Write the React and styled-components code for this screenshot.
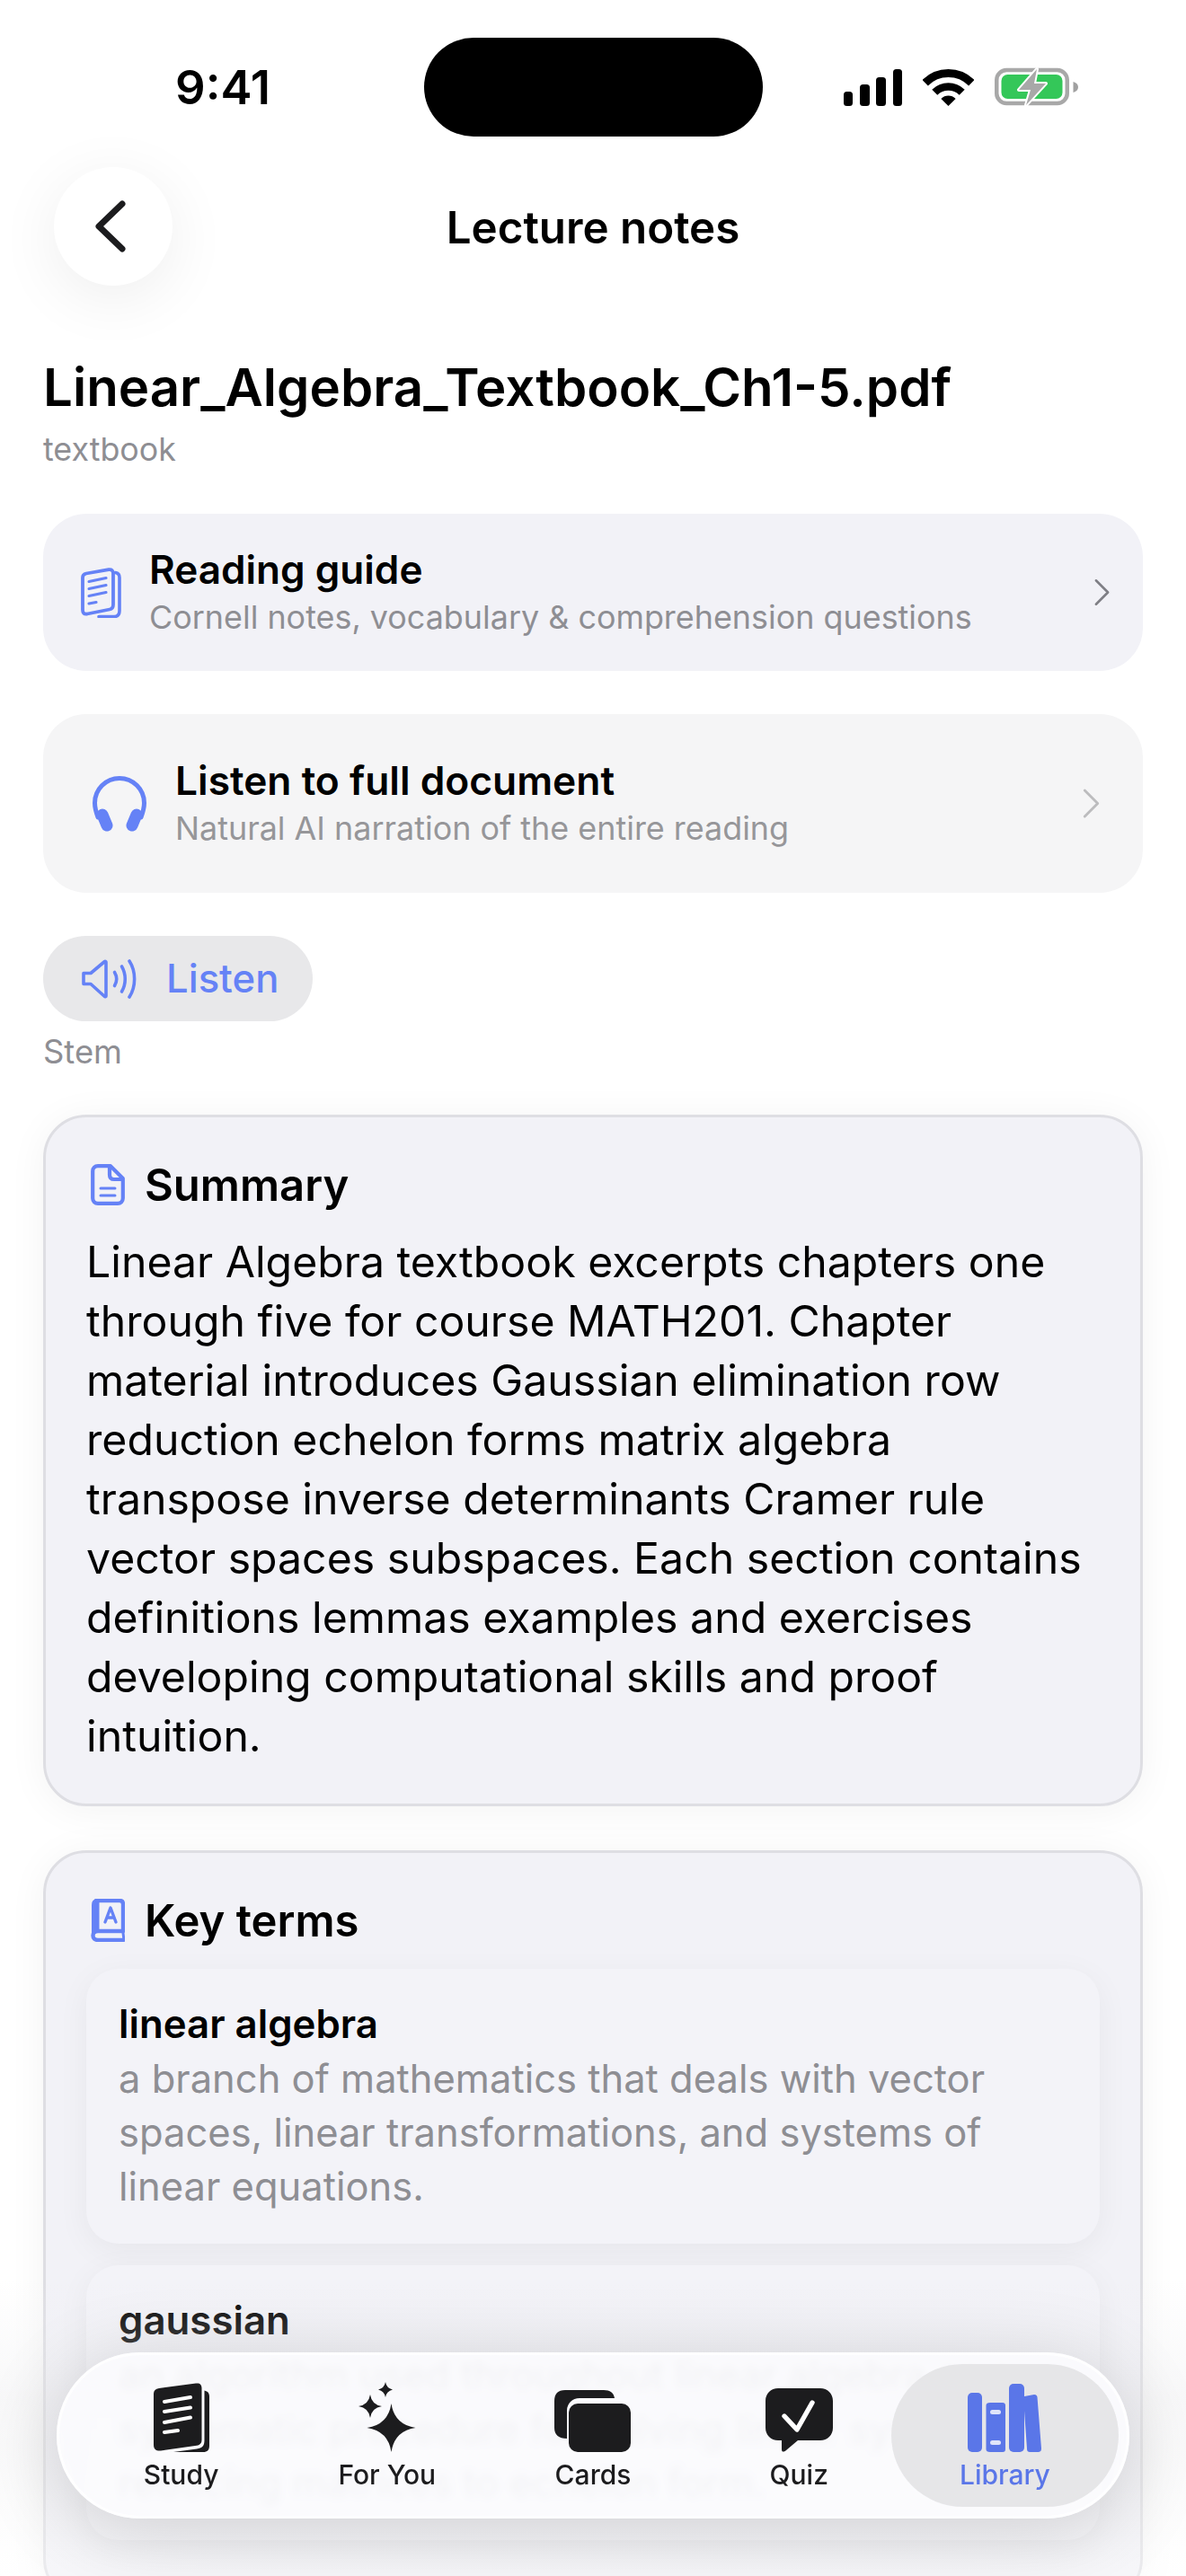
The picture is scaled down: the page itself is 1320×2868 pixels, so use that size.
import React from 'react';
import styled, { createGlobalStyle } from 'styled-components';

const BLUE = '#6582f6';
const INK = '#1c1c1e';

const Global = createGlobalStyle`
  html, body { margin: 0; padding: 0; background: #fff; }
  body { font-family: Inter, "Liberation Sans", sans-serif; color: #000; -webkit-font-smoothing: antialiased; }
  * { box-sizing: border-box; }
`;

const Page = styled.div`
  position: relative;
  width: 1320px;
  height: 2868px;
  overflow: hidden;
  background: #fff;
`;

const StatusBar = styled.div`
  display: grid;
  grid-template-columns: 472px 377px 1fr;
  align-items: center;
  height: 110px;
  margin-top: 42px;
`;
const Time = styled.div`
  padding-left: 195px;
  font-size: 52.6px;
  font-weight: 600;
  line-height: 110px;
`;
const Island = styled.div`
  height: 110px;
  border-radius: 55px;
  background: #000;
`;
const StatusIcons = styled.div`
  display: flex;
  align-items: center;
  gap: 23px;
  padding-left: 90px;
`;

const Header = styled.header`
  display: grid;
  grid-template-columns: 1fr auto 1fr;
  align-items: center;
  margin: 34px 60px 0;
`;
const BackButton = styled.div`
  display: flex;
  align-items: center;
  justify-content: center;
  width: 132px;
  height: 132px;
  padding-right: 6px;
  border-radius: 50%;
  background: #fff;
  box-shadow: 0 14px 70px rgba(0, 0, 0, 0.07);
`;
const HeaderTitle = styled.h1`
  margin: 0;
  padding-top: 2px;
  font-size: 49.3px;
  font-weight: 600;
  line-height: 60px;
`;

const Content = styled.main`
  padding: 0 48px;
`;
const FileTitle = styled.h2`
  margin: 78px 0 0;
  font-size: 58.2px;
  font-weight: 600;
  line-height: 70px;
  white-space: nowrap;
`;
const FileKind = styled.div`
  margin-top: 12px;
  font-size: 35.8px;
  line-height: 44px;
  color: #8e8e93;
`;

const ActionCard = styled.div`
  display: flex;
  align-items: center;
  height: ${p => p.$height}px;
  margin-top: ${p => p.$top}px;
  padding: 0 ${p => p.$right}px 0 ${p => p.$left}px;
  border-radius: 48px;
  background: ${p => p.$bg};
`;
const ActionText = styled.div`
  display: flex;
  flex-direction: column;
  margin-left: ${p => p.$gap}px;
  margin-right: auto;
`;
const ActionTitle = styled.div`
  font-size: ${p => p.$size}px;
  font-weight: 600;
  line-height: 54px;
`;
const ActionSub = styled.div`
  font-size: 35.9px;
  line-height: 52px;
  color: ${p => p.$color};
`;

const ListenPill = styled.div`
  display: inline-flex;
  align-items: center;
  gap: 32px;
  width: 300px;
  height: 95px;
  margin-top: 48px;
  padding-left: 43px;
  border-radius: 48px;
  background: #e8e8ea;
  font-size: 43.6px;
  font-weight: 500;
  color: ${BLUE};
`;
const StemLabel = styled.div`
  margin-top: 12px;
  font-size: 36.4px;
  line-height: 44px;
  color: #8e8e93;
`;

const SectionCard = styled.section`
  margin-top: ${p => p.$top}px;
  padding: 45px 45px 42px;
  border: 3px solid #dedee3;
  border-radius: 48px;
  background: #f2f2f7;
  box-shadow: 0 4px 44px rgba(0, 0, 0, 0.05);
`;
const SectionHead = styled.div`
  display: flex;
  align-items: center;
  gap: 22px;
  height: 60px;
  margin-bottom: ${p => p.$gap}px;
  padding-left: 5px;
  font-size: 49px;
  font-weight: 600;
`;
const BodyText = styled.p`
  margin: 0;
  font-size: 48.2px;
  line-height: 66px;
`;

const TermCard = styled.div`
  margin-bottom: 24px;
  padding: 32px 36px 34px;
  border-radius: 36px;
  background: #f3f3f8;
  box-shadow: 0 8px 36px rgba(0, 0, 0, 0.05);
`;
const TermName = styled.div`
  font-size: 43.8px;
  font-weight: 600;
  line-height: 60px;
`;
const TermDefinition = styled.div`
  font-size: 43.5px;
  line-height: 60px;
  color: #8e8e93;
`;

const BottomFade = styled.div`
  position: absolute;
  left: 0;
  right: 0;
  bottom: 0;
  height: 330px;
  background: linear-gradient(to bottom, rgba(255, 255, 255, 0) 0%, rgba(240, 240, 242, 0.45) 40%, rgba(255, 255, 255, 0.4) 100%);
`;
const TabBar = styled.nav`
  position: absolute;
  left: 63px;
  right: 63px;
  bottom: 64px;
  display: grid;
  grid-template-columns: repeat(5, 1fr);
  height: 185px;
  padding: 10px 21px;
  border: 3px solid rgba(255, 255, 255, 0.85);
  border-radius: 93px;
  background: rgba(252, 252, 254, 0.86);
  backdrop-filter: blur(5px);
  box-shadow: 0 14px 90px rgba(0, 0, 0, 0.16);
`;
const Tab = styled.div`
  position: relative;
  display: flex;
  flex-direction: column;
  align-items: center;
  padding-top: 20px;
  color: ${p => (p.$active ? '#5a76e8' : INK)};
  &::before {
    content: '';
    display: ${p => (p.$active ? 'block' : 'none')};
    position: absolute;
    inset: 0 -12px;
    border-radius: 80px;
    background: rgba(228, 228, 230, 0.92);
  }
`;
const TabIcon = styled.div`
  position: relative;
  display: flex;
  align-items: flex-end;
  justify-content: center;
  height: 78px;
`;
const TabLabel = styled.div`
  position: relative;
  margin-top: 7px;
  font-size: 30px;
  font-weight: 500;
  line-height: 36px;
`;

const star = (cx, cy, r) => {
  const k = r * 0.13;
  return `M${cx} ${cy - r}Q${cx + k} ${cy - k} ${cx + r} ${cy}Q${cx + k} ${cy + k} ${cx} ${cy + r}Q${cx - k} ${cy + k} ${cx - r} ${cy}Q${cx - k} ${cy - k} ${cx} ${cy - r}Z`;
};

const Signal = () => (
  <svg width="65" height="41" viewBox="0 0 65 41" fill="#000">
    <rect x="0" y="25" width="10" height="16" rx="3.5" />
    <rect x="18" y="17" width="11" height="24" rx="3.5" />
    <rect x="36" y="9" width="11" height="32" rx="3.5" />
    <rect x="55" y="0" width="10" height="41" rx="3.5" />
  </svg>
);
const Wifi = () => (
  <svg width="57" height="41" viewBox="0 0 57 41" fill="none" stroke="#000">
    <path d="M2.7 15.2A36.5 36.5 0 0 1 54.3 15.2" strokeWidth="9" />
    <path d="M13.3 25.8A21.5 21.5 0 0 1 43.7 25.8" strokeWidth="8.5" />
    <path d="M28.5 41L20.4 32.9A11.5 11.5 0 0 1 36.6 32.9Z" fill="#000" stroke="none" />
  </svg>
);
const Battery = () => (
  <svg width="93" height="44" viewBox="0 0 93 44" fill="none">
    <rect x="2.25" y="3" width="78.5" height="37" rx="11" stroke="#a8a8a8" strokeWidth="4.5" />
    <rect x="7.5" y="8" width="68" height="27" rx="7" fill="#34c759" />
    <path d="M87.5 16C91 17 93 19 93 22C93 25 91 27 87.5 28Z" fill="#a0a0a0" />
    <path d="M47 2L27 25H40L35 42L57 18H44Z" fill="#a8a8a8" stroke="#fff" strokeWidth="4" strokeLinejoin="round" paintOrder="stroke" />
  </svg>
);
const BackChevron = () => (
  <svg width="34" height="58" viewBox="0 0 34 58" fill="none" stroke={INK} strokeWidth="7" strokeLinecap="round" strokeLinejoin="round">
    <path d="M30 4L4 29L30 54" />
  </svg>
);
const PageStack = () => (
  <svg width="45" height="56" viewBox="0 0 45 56" fill="none">
    <path d="M38.5 5.5C42 6 43 8 43 11V48C43 52.5 41 54.5 37 54.5H20" stroke={BLUE} strokeWidth="3.6" strokeLinecap="round" />
    <path d="M6 6.5L31 2.2C34.5 1.7 36 3.5 36 6.5V41C36 44 35 46 32 46.5L7 51.5C3.5 52 2 50.5 2 47V11C2 8.5 3.5 7 6 6.5Z" stroke={BLUE} strokeWidth="3.8" />
    <path d="M9 15.5L28 11.5M9 23.5L28 19.5M9 31.5L28 27.5M9 40L17 38.5" stroke={BLUE} strokeWidth="3.2" strokeLinecap="round" />
  </svg>
);
const Headphones = () => (
  <svg width="60" height="62" viewBox="0 0 60 62" fill="none" stroke={BLUE} strokeLinecap="round">
    <path d="M6 46C3.5 39 2.5 34 2.5 30A27.5 27.5 0 0 1 57.5 30C57.5 34 56.5 39 54 46" strokeWidth="5" />
    <path d="M11 43L16 55M49 43L44 55" strokeWidth="13" />
  </svg>
);
const RowChevron = ({ color, w, h }) => (
  <svg width={w} height={h} viewBox="0 0 18 32" fill="none" stroke={color} strokeWidth="2.8" strokeLinecap="round" strokeLinejoin="round">
    <path d="M2 2L16 16L2 30" />
  </svg>
);
const Speaker = () => (
  <svg width="62" height="44" viewBox="0 0 62 44" fill="none" stroke={BLUE} strokeWidth="3.6" strokeLinecap="round" strokeLinejoin="round">
    <path d="M2 15.5V27.5H10L25.5 41.5C26 42 27 41.5 27 41V3C27 2.5 26 2 25.5 2.5L10 15.5Z" />
    <path d="M36.5 14.5C39.5 19.5 39.5 24.5 36.5 29.5" />
    <path d="M44.5 8C49.5 16.5 49.5 27.5 44.5 36" />
    <path d="M53 2C60.5 13.5 60.5 30.5 53 42" />
  </svg>
);
const DocIcon = () => (
  <svg width="38" height="46" viewBox="0 0 38 46" fill="none" stroke={BLUE} strokeWidth="4.2" strokeLinecap="round" strokeLinejoin="round">
    <path d="M8 2.2H22L35.8 16V38C35.8 41.5 33.5 43.8 30 43.8H8C4.5 43.8 2.2 41.5 2.2 38V8C2.2 4.5 4.5 2.2 8 2.2Z" />
    <path d="M21 3V12C21 15 22.5 17 26 17H35" />
    <path d="M11 27H27M11 35H27" strokeWidth="3" />
  </svg>
);
const BookIcon = () => (
  <svg width="38" height="48" viewBox="0 0 38 48" fill="none">
    <path d="M6 2H32C34.5 2 36 3.5 36 6V36H8C4.5 36 2.5 38 2.5 41C2.5 44 4.5 46 8 46H36" stroke={BLUE} strokeWidth="4.4" strokeLinecap="round" strokeLinejoin="round" />
    <path d="M2.5 41V7C2.5 4 3.5 2 6 2H8V36" fill={BLUE} stroke={BLUE} strokeWidth="3" />
    <path d="M36 38L37 46" stroke={BLUE} strokeWidth="3" strokeLinecap="round" />
    <path d="M16 26L22 10L28 26M18.2 21H25.8" stroke={BLUE} strokeWidth="3.4" strokeLinecap="round" strokeLinejoin="round" />
  </svg>
);
const StudyIcon = () => (
  <svg width="62" height="77" viewBox="0 0 62 77" fill={INK}>
    <path d="M56.5 8.5C60.5 9.5 62 11.5 62 15V70C62 74.5 60 77 55 77H22L48 73.5C54 72.5 56.5 70 56.5 64Z" />
    <path d="M6 6L47 .6C51.5 0 53.5 2 53.5 6V63C53.5 67 52 69 48 69.8L8 75.5C3 76 0 74 0 69V12C0 8.5 2 6.5 6 6Z" />
    <path d="M12 21L41 16M12 32L41 27.5M12 44L41 38.5M12 55L27 53" fill="none" stroke="#fff" strokeWidth="4" strokeLinecap="round" />
  </svg>
);
const SparkleIcon = () => (
  <svg width="64" height="78" viewBox="0 0 64 78" fill={INK}>
    <path d="M30 0Q31.2 6.8 38 8.5Q31.2 10.2 30 17Q28.8 10.2 22 8.5Q28.8 6.8 30 0Z" />
    <path d={star(13, 27, 13)} />
    <path d={star(36.5, 51, 27)} />
  </svg>
);
const CardsIcon = () => (
  <svg width="85" height="69" viewBox="0 0 85 69" fill={INK}>
    <path d="M12 0H55C62 0 66 3 67 9H28C20 9 14 15 14 23V54C5 54 0 50 0 42V12C0 4 4 0 12 0Z" />
    <rect x="16" y="15" width="69" height="54" rx="10" />
  </svg>
);
const QuizIcon = () => (
  <svg width="75" height="71" viewBox="0 0 75 71" fill={INK}>
    <path d="M14 0H61C69 0 75 6 75 14V44C75 52 69 58 61 58H36L23 69C20 71.5 18 71 18 68V58H14C6 58 0 52 0 44V14C0 6 6 0 14 0Z" />
    <path d="M21 31L35 46L52 16" fill="none" stroke="#fff" strokeWidth="5.4" strokeLinecap="round" strokeLinejoin="round" />
  </svg>
);
const LibraryIcon = () => (
  <svg width="82" height="76" viewBox="0 0 82 76" fill="#5a76e8">
    <rect x="0" y="10" width="16" height="66" rx="5" />
    <path d="M25 21H39C42 21 42 24 42 24V73C42 75 41 76 39 76H25C22 76 20.5 75 20.5 73V24C20.5 22 22 21 25 21Z" />
    <rect x="25" y="29" width="12" height="5" rx="2.5" fill="#dfe4fa" />
    <rect x="25" y="63" width="12" height="5" rx="2.5" fill="#dfe4fa" />
    <rect x="46" y="0" width="17" height="76" rx="5" />
    <path d="M63 14L74 12C76.5 12 77.5 13.5 77.5 15L82 72C82 75 81 75.5 79 76H70C67 76 66 75 66 72L63 30Z" />
  </svg>
);

const tabs = [
  { label: 'Study', icon: <StudyIcon /> },
  { label: 'For You', icon: <SparkleIcon /> },
  { label: 'Cards', icon: <CardsIcon /> },
  { label: 'Quiz', icon: <QuizIcon /> },
  { label: 'Library', icon: <LibraryIcon />, active: true },
];

const terms = [
  { name: 'linear algebra', def: 'a branch of mathematics that deals with vector spaces, linear transformations, and systems of linear equations.' },
  { name: 'gaussian', def: 'an algorithm used throughout linear algebra as a systematic procedure for solving linear systems by reducing matrices to echelon form.' },
];

export default function App() {
  return (
    <Page>
      <Global />
      <StatusBar>
        <Time>9:41</Time>
        <Island />
        <StatusIcons>
          <Signal />
          <Wifi />
          <Battery />
        </StatusIcons>
      </StatusBar>
      <Header>
        <BackButton><BackChevron /></BackButton>
        <HeaderTitle>Lecture notes</HeaderTitle>
      </Header>
      <Content>
        <FileTitle>Linear_Algebra_Textbook_Ch1-5.pdf</FileTitle>
        <FileKind>textbook</FileKind>
        <ActionCard $height={175} $top={50} $left={42} $right={37} $bg="#f2f2f7">
          <PageStack />
          <ActionText $gap={31}>
            <ActionTitle $size={44.1}>Reading guide</ActionTitle>
            <ActionSub $color="#8e8e93">Cornell notes, vocabulary &amp; comprehension questions</ActionSub>
          </ActionText>
          <RowChevron color="#7f7f85" w={17} h={31} />
        </ActionCard>
        <ActionCard $height={199} $top={48} $left={55} $right={48} $bg="#f5f5f6">
          <Headphones />
          <ActionText $gap={32}>
            <ActionTitle $size={44.3}>Listen to full document</ActionTitle>
            <ActionSub $color="#969699">Natural AI narration of the entire reading</ActionSub>
          </ActionText>
          <RowChevron color="#bcbcbe" w={19} h={33} />
        </ActionCard>
        <ListenPill><Speaker />Listen</ListenPill>
        <StemLabel>Stem</StemLabel>
        <SectionCard $top={48}>
          <SectionHead $gap={23}><DocIcon />Summary</SectionHead>
          <BodyText>
            Linear Algebra textbook excerpts chapters one through five for course MATH201. Chapter material introduces Gaussian elimination row reduction echelon forms matrix algebra transpose inverse determinants Cramer rule vector spaces subspaces. Each section contains definitions lemmas examples and exercises developing computational skills and proof intuition.
          </BodyText>
        </SectionCard>
        <SectionCard $top={49}>
          <SectionHead $gap={24}><BookIcon />Key terms</SectionHead>
          {terms.map(t => (
            <TermCard key={t.name}>
              <TermName>{t.name}</TermName>
              <TermDefinition>{t.def}</TermDefinition>
            </TermCard>
          ))}
        </SectionCard>
      </Content>
      <BottomFade />
      <TabBar>
        {tabs.map(t => (
          <Tab key={t.label} $active={t.active}>
            <TabIcon>{t.icon}</TabIcon>
            <TabLabel>{t.label}</TabLabel>
          </Tab>
        ))}
      </TabBar>
    </Page>
  );
}
